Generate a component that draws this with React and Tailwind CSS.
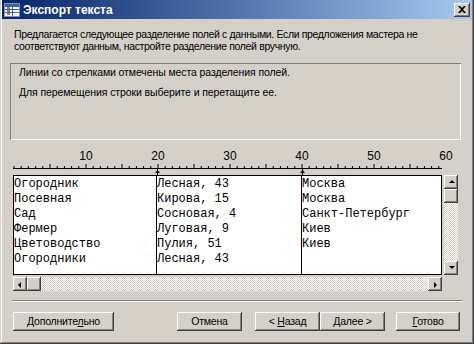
import React from "react";

const rows = [
  ["Огородник", "Лесная, 43", "Москва"],
  ["Посевная", "Кирова, 15", "Москва"],
  ["Сад", "Сосновая, 4", "Санкт-Петербург"],
  ["Фермер", "Луговая, 9", "Киев"],
  ["Цветоводство", "Пулия, 51", "Киев"],
  ["Огородники", "Лесная, 43", ""],
];

const raised =
  "bg-[#d4d0c8] shadow-[inset_-1px_-1px_#404040,inset_1px_1px_#ffffff,inset_-2px_-2px_#808080,inset_2px_2px_#d4d0c8]";
const checker =
  "bg-[repeating-conic-gradient(#ffffff_0_25%,#d4d0c8_0_50%)] bg-[length:2px_2px]";

function Btn({ children, className = "" }) {
  return (
    <div
      className={`${raised} h-[19px] flex items-center justify-center text-[10.5px] tracking-[-0.2px] text-black ${className}`}
    >
      {children}
    </div>
  );
}

function Arrow({ dir }) {
  const pts = {
    up: "2,5 5,2 8,5",
    down: "2,2 5,5 8,2",
    left: "5,2 2,5 5,8",
    right: "3,2 6,5 3,8",
  }[dir];
  return (
    <svg width="9" height="9" viewBox="0 0 9 9">
      <polygon points={pts} fill="#000" />
    </svg>
  );
}

function ScrollBtn({ dir }) {
  return (
    <div className={`${raised} w-[14px] h-[14px] flex items-center justify-center shrink-0`}>
      <Arrow dir={dir} />
    </div>
  );
}

function Ruler() {
  const ticks = [];
  for (let i = 0; i <= 59; i++) {
    const x = 1 + i * 7.2;
    const big = i % 5 === 0 && i > 0;
    ticks.push(
      <line key={i} x1={x} x2={x} y1={big ? 19 : 21} y2={23} stroke="#000" strokeWidth="1" />
    );
  }
  const labels = [10, 20, 30, 40, 50, 60];
  return (
    <svg width="461" height="30" viewBox="0 0 461 30" className="block">
      {labels.map((n) => (
        <text
          key={n}
          x={1 + n * 7.2}
          y={15}
          textAnchor="middle"
          fontFamily="'Liberation Sans', Arial, sans-serif"
          fontSize="12"
          fill="#000"
        >
          {n}
        </text>
      ))}
      {ticks}
      <line x1="0" x2="429" y1="23.5" y2="23.5" stroke="#000" strokeWidth="1" />
      {[144, 289].map((x) => (
        <g key={x}>
          <polygon points={`${x - 2},28 ${x + 0.5},25 ${x + 3},28`} fill="#000" />
          <line x1={x + 0.5} x2={x + 0.5} y1="24" y2="30" stroke="#000" />
        </g>
      ))}
    </svg>
  );
}

export default function App() {
  return (
    <div
      className="w-[474px] h-[344px] bg-[#d4d0c8] flex flex-col overflow-hidden shadow-[inset_-1px_-1px_#404040,inset_1px_0_#d4d0c8,inset_-2px_-2px_#808080,inset_2px_0_#ffffff]"
      style={{ fontFamily: "'Liberation Sans', Arial, sans-serif" }}
    >
      {/* Title bar */}
      <div className="mx-[2px] h-[19px] shrink-0 bg-gradient-to-r from-[#0a246a] to-[#a6caf0] flex items-center pl-[2px] pr-[2px]">
        <svg width="16" height="14" viewBox="0 0 16 14" className="shrink-0">
          <rect x="0.5" y="0.5" width="15" height="13" fill="#fff" stroke="#8090b0" />
          <rect x="1" y="1" width="14" height="3" fill="#4060a0" />
          <line x1="1" x2="15" y1="6.5" y2="6.5" stroke="#4060a0" />
          <line x1="1" x2="15" y1="9.5" y2="9.5" stroke="#4060a0" />
          <line x1="8.5" x2="8.5" y1="4" y2="13" stroke="#4060a0" />
          <line x1="3" x2="6" y1="5" y2="5" stroke="#000" />
          <line x1="3" x2="6" y1="8" y2="8" stroke="#000" />
          <line x1="3" x2="6" y1="11" y2="11" stroke="#000" />
        </svg>
        <span className="ml-[3px] text-white font-bold text-[12px] leading-none">Экспорт текста</span>
        <div className="flex-1" />
        <div className={`${raised} w-[16px] h-[14px] flex items-center justify-center`}>
          <svg width="8" height="7" viewBox="0 0 8 7">
            <path d="M0 0 L2 0 L4 2 L6 0 L8 0 L5 3.5 L8 7 L6 7 L4 5 L2 7 L0 7 L3 3.5 Z" fill="#000" />
          </svg>
        </div>
      </div>

      {/* Description */}
      <div className="ml-[14px] mt-[9px] text-[10.5px] tracking-[-0.35px] leading-[12px] text-black">
        <div>Предлагается следующее разделение полей с данными. Если предложения мастера не</div>
        <div>соответствуют данным, настройте разделение полей вручную.</div>
      </div>

      {/* Info box */}
      <div className="ml-[10px] mt-[11px] w-[451px] h-[77px] shrink-0 shadow-[inset_1px_1px_#808080,inset_-1px_-1px_#ffffff] pl-[9px] pt-[3px] text-[10.5px] tracking-[-0.1px] leading-[13px] text-black">
        <div>Линии со стрелками отмечены места разделения полей.</div>
        <div className="mt-[7px]">Для перемещения строки выберите и перетащите ее.</div>
      </div>

      {/* Ruler */}
      <div className="ml-[13px] mt-[5px] shrink-0">
        <Ruler />
      </div>

      {/* Data + vertical scrollbar */}
      <div className="ml-[13px] flex gap-[2px] shrink-0">
        <div className="w-[429px] h-[100px] bg-white border border-black flex text-[12px] leading-[15px] text-black overflow-hidden"
          style={{ fontFamily: "'Liberation Mono', 'Courier New', monospace" }}>
          <div className="w-[143px] border-r border-black pt-[1px] whitespace-pre">
            {rows.map((r, i) => (
              <div key={i}>{r[0]}</div>
            ))}
          </div>
          <div className="w-[145px] border-r border-black pt-[1px] whitespace-pre">
            {rows.map((r, i) => (
              <div key={i}>{r[1]}</div>
            ))}
          </div>
          <div className="flex-1 pt-[1px] whitespace-pre">
            {rows.map((r, i) => (
              <div key={i}>{r[2] || "\u00a0"}</div>
            ))}
          </div>
        </div>
        <div className={`w-[14px] h-[100px] flex flex-col ${checker}`}>
          <ScrollBtn dir="up" />
          <div className={`${raised} w-[14px] h-[14px] shrink-0`} />
          <div className="flex-1" />
          <ScrollBtn dir="down" />
        </div>
      </div>

      {/* Horizontal scrollbar */}
      <div className={`ml-[13px] mt-[2px] w-[429px] h-[14px] flex shrink-0 ${checker}`}>
        <ScrollBtn dir="left" />
        <div className={`${raised} w-[14px] h-[14px] shrink-0`} />
        <div className="flex-1" />
        <ScrollBtn dir="right" />
      </div>

      {/* Separator */}
      <div className="ml-[12px] mt-[9px] w-[450px] h-[2px] shrink-0 border-t border-[#808080] border-b border-b-white" />

      {/* Buttons */}
      <div className="ml-[13px] mt-[10px] flex shrink-0">
        <Btn className="w-[101px]">
          <span>
            Дополните<span className="underline">л</span>ьно
          </span>
        </Btn>
        <Btn className="w-[65px] ml-[63px]">Отмена</Btn>
        <Btn className="w-[65px] ml-[13px]">
          <span>
            &lt; <span className="underline">Н</span>азад
          </span>
        </Btn>
        <Btn className="w-[65px]">
          <span>
            <span className="underline">Д</span>алее &gt;
          </span>
        </Btn>
        <Btn className="w-[64px] ml-[11px]">
          <span>
            <span className="underline">Г</span>отово
          </span>
        </Btn>
      </div>
    </div>
  );
}
